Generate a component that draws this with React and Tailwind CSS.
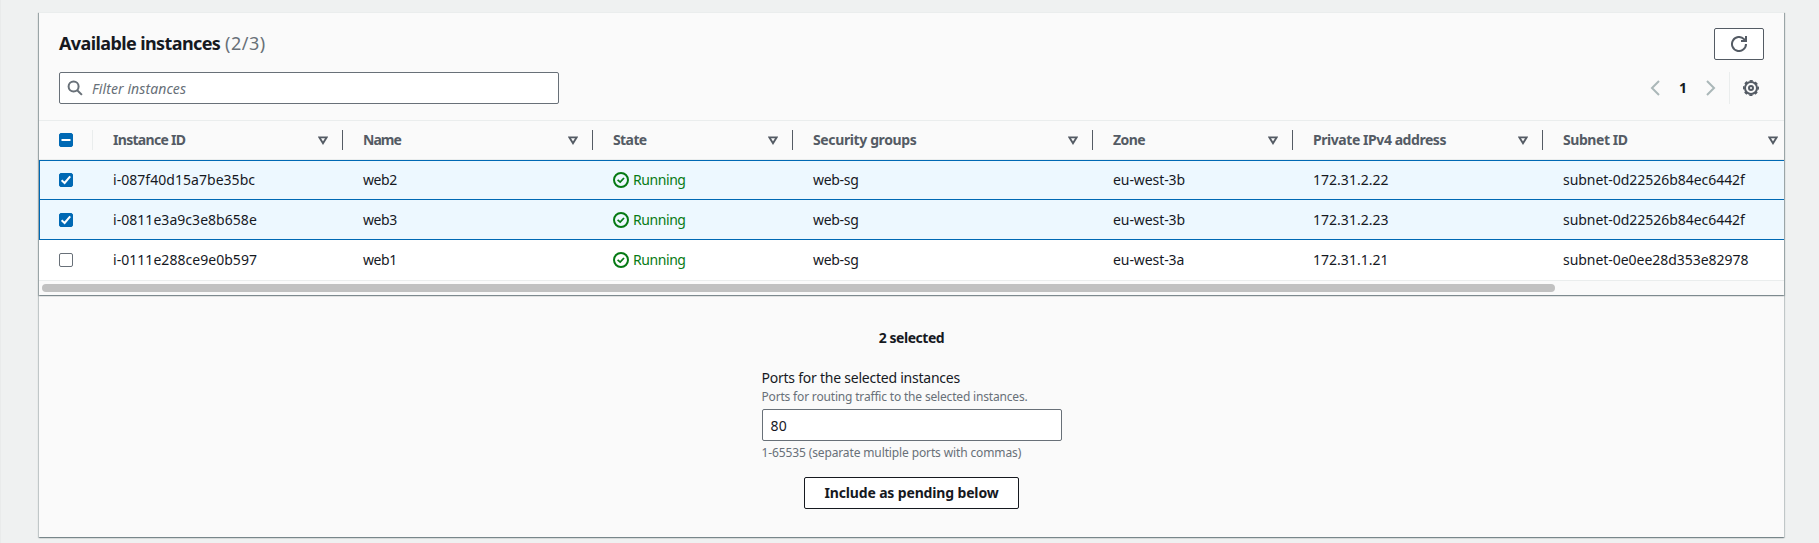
import React from "react";

const columns = [
  { label: "Instance ID", width: "w-[250px]", head: "tracking-[-0.7px]", cell: "tracking-[0.04px]" },
  { label: "Name", width: "w-[250px]", head: "tracking-[-0.95px]", cell: "tracking-[-0.4px]" },
  { label: "State", width: "w-[200px]", head: "tracking-[-0.6px]", cell: "tracking-[-0.43px]" },
  { label: "Security groups", width: "w-[300px]", head: "tracking-[-0.38px]", cell: "tracking-[-0.3px]" },
  { label: "Zone", width: "w-[200px]", head: "tracking-[-0.6px]", cell: "tracking-[-0.08px]" },
  { label: "Private IPv4 address", width: "w-[250px]", head: "tracking-[-0.44px]", cell: "tracking-[0.02px]" },
  { label: "Subnet ID", width: "w-[250px]", head: "tracking-[-0.44px]", cell: "tracking-[-0.04px]" },
];

const rows = [
  { selected: true, cells: ["i-087f40d15a7be35bc", "web2", "Running", "web-sg", "eu-west-3b", "172.31.2.22", "subnet-0d22526b84ec6442f"] },
  { selected: true, cells: ["i-0811e3a9c3e8b658e", "web3", "Running", "web-sg", "eu-west-3b", "172.31.2.23", "subnet-0d22526b84ec6442f"] },
  { selected: false, cells: ["i-0111e288ce9e0b597", "web1", "Running", "web-sg", "eu-west-3a", "172.31.1.21", "subnet-0e0ee28d353e82978"] },
];

const rowSizes = ["h-10 border-t", "h-10 pt-px", "h-[41px]"];

function Checkbox({ state }) {
  const filled = state !== "off";
  return (
    <span
      className={
        "flex size-3.5 items-center justify-center rounded-[2px] border " +
        (filled ? "border-[#0069b4] bg-[#0069b4]" : "border-[#687078] bg-white")
      }
    >
      {filled && (
        <svg viewBox="0 0 14 14" className="size-3.5 shrink-0" fill="none" stroke="#fff" strokeWidth="2">
          {state === "on" ? <path d="M2.6 7.3 5.6 10 11.2 3.4" /> : <path d="M2.5 7h9" />}
        </svg>
      )}
    </span>
  );
}

function StatusIcon() {
  return (
    <svg viewBox="0 0 16 16" className="size-4 shrink-0" fill="none" stroke="#067a14" strokeWidth="2">
      <circle cx="8" cy="8" r="7" />
      <path d="M4.6 7.8 7.2 10.1 11 6" strokeWidth="1.8" />
    </svg>
  );
}

function FilterArrow() {
  return (
    <svg viewBox="0 0 10 9" className="h-[9px] w-2.5 shrink-0" fill="none" stroke="#545b64" strokeWidth="1.9">
      <path d="M1.4 1.4h7.2L5 7.2z" />
    </svg>
  );
}

function SearchIcon() {
  return (
    <svg viewBox="0 0 16 16" className="size-4 shrink-0" fill="none" stroke="#687078" strokeWidth="2">
      <circle cx="6.6" cy="6.6" r="5" />
      <path d="M10.2 10.2 14.9 14.9" />
    </svg>
  );
}

function RefreshIcon() {
  return (
    <svg viewBox="0 0 16 16" className="size-4" fill="none" stroke="#545b64" strokeWidth="2">
      <path d="M15 8a7 7 0 1 1-2-4.9L14.6 5" />
      <path d="M10 5h5V0" />
    </svg>
  );
}

function GearIcon() {
  return (
    <svg viewBox="0 0 16 16" className="size-4" fill="none" stroke="#545b64">
      <circle cx="8" cy="8" r="6" strokeWidth="2" />
      <circle cx="8" cy="8" r="7.2" strokeWidth="1.6" strokeDasharray="3.2 2.455" strokeDashoffset="1.6" />
      <circle cx="8" cy="8" r="2" strokeWidth="2" />
    </svg>
  );
}

function Chevron({ direction }) {
  return (
    <svg viewBox="0 0 16 16" className="size-4" fill="none" stroke="#aab7b8" strokeWidth="2">
      {direction === "left" ? <path d="M13 1 6 8l7 7" /> : <path d="M6 1l7 7-7 7" />}
    </svg>
  );
}

function HeaderRow() {
  return (
    <div className="flex h-[39px] w-[1760px] shrink-0 items-center border-b border-[#eaeded] pl-5">
      <div className="flex h-5 w-[34px] items-center border-r border-[#eaeded]">
        <Checkbox state="mixed" />
      </div>
      {columns.map((c) => (
        <div key={c.label} className={c.width + " flex h-5 shrink-0 items-center justify-between border-r border-[#545b64] pl-5 pr-[14px] text-[#545b64]"}>
          <span className={"font-bold " + c.head}>{c.label}</span>
          <FilterArrow />
        </div>
      ))}
    </div>
  );
}

function InstanceRow({ row, size }) {
  const tone = row.selected ? "bg-[#edf8ff] border-[#0069b4]" : "bg-white border-[#eaeded]";
  const edge = row.selected ? "border-l pl-[19px]" : "pl-5";
  return (
    <div className={"flex w-[1760px] shrink-0 items-center border-b " + tone + " " + edge + " " + size}>
      <div className="w-[34px] shrink-0">
        <Checkbox state={row.selected ? "on" : "off"} />
      </div>
      {row.cells.map((value, i) => (
        <div key={columns[i].label} className={columns[i].width + " flex shrink-0 items-center gap-1 pl-5"}>
          {columns[i].label === "State" && <StatusIcon />}
          <span className={columns[i].cell + (columns[i].label === "State" ? " text-[#067a14]" : "")}>{value}</span>
        </div>
      ))}
    </div>
  );
}

export default function App() {
  return (
    <div className="h-[543px] w-[1819px] overflow-hidden border-l border-[#e9ebeb] bg-[#eff1f1] pl-[38px] pt-3 font-['Noto_Sans',sans-serif] text-[14px] leading-5 text-[#16191f]">
      <div className="flex h-[525px] w-[1745px] flex-col bg-[#fafafa] shadow-[0_1px_1px_0_rgba(0,28,36,0.3),1px_1px_1px_0_rgba(0,28,36,0.15),-1px_1px_1px_0_rgba(0,28,36,0.15)]">
        <section className="flex h-[283px] shrink-0 flex-col border-t border-[#eaeded] shadow-[0_1px_1px_0_rgba(0,28,36,0.3),1px_1px_1px_0_rgba(0,28,36,0.15),-1px_1px_1px_0_rgba(0,28,36,0.15)]">
          <header className="flex h-[107px] shrink-0 flex-col gap-3 px-5 pt-[15px]">
            <div className="flex h-8 items-center justify-between">
              <h2 className="h-[34px] text-[18px] leading-8">
                <span className="font-bold tracking-[-0.6px]">Available instances</span>{" "}
                <span className="tracking-[0.5px] text-[#687078]">(2/3)</span>
              </h2>
              <button className="flex h-8 w-[50px] items-center justify-center rounded-[2px] border border-[#545b64] bg-white">
                <RefreshIcon />
              </button>
            </div>
            <div className="flex h-8 items-center justify-between">
              <div className="flex h-8 w-[500px] items-center gap-[9px] rounded-[2px] border border-[#687078] bg-white pl-[7px]">
                <SearchIcon />
                <span className="pt-px italic tracking-[0.09px] text-[#687078]">Filter instances</span>
              </div>
              <div className="flex h-8 items-center pr-[5px]">
                <Chevron direction="left" />
                <span className="w-[39px] pl-[3px] text-center font-bold">1</span>
                <Chevron direction="right" />
                <span className="ml-3 mr-[13px] h-8 w-px bg-[#eaeded]" />
                <GearIcon />
              </div>
            </div>
          </header>
          <div className="flex h-[161px] shrink-0 flex-col overflow-hidden border-t border-[#eaeded]">
            <HeaderRow />
            {rows.map((row, i) => (
              <InstanceRow key={row.cells[0]} row={row} size={rowSizes[i]} />
            ))}
          </div>
          <div className="flex h-[14px] items-start pl-[3px] pt-[3px]">
            <span className="h-2 w-[1513px] rounded-full bg-[#c1c1c1]" />
          </div>
        </section>
        <section className="flex flex-1 flex-col items-center pt-[33px]">
          <p className="font-bold tracking-[-0.46px]">2 selected</p>
          <div className="mt-5 flex w-[300px] flex-col">
            <label className="tracking-[-0.235px]">Ports for the selected instances</label>
            <span className="h-[18px] text-[12px] leading-[18px] tracking-[-0.177px] text-[#687078]">Ports for routing traffic to the selected instances.</span>
            <div className="mt-[3px] flex h-8 items-center rounded-[2px] border border-[#687078] bg-white pl-2 pt-0.5 tracking-[0.25px]">80</div>
            <span className="mt-[3px] text-[12px] leading-[18px] tracking-[-0.127px] text-[#687078]">1-65535 (separate multiple ports with commas)</span>
          </div>
          <button className="mt-[15px] h-8 w-[215px] rounded-[2px] border border-[#16191f] bg-white font-bold tracking-[-0.15px]">
            Include as pending below
          </button>
        </section>
      </div>
    </div>
  );
}
